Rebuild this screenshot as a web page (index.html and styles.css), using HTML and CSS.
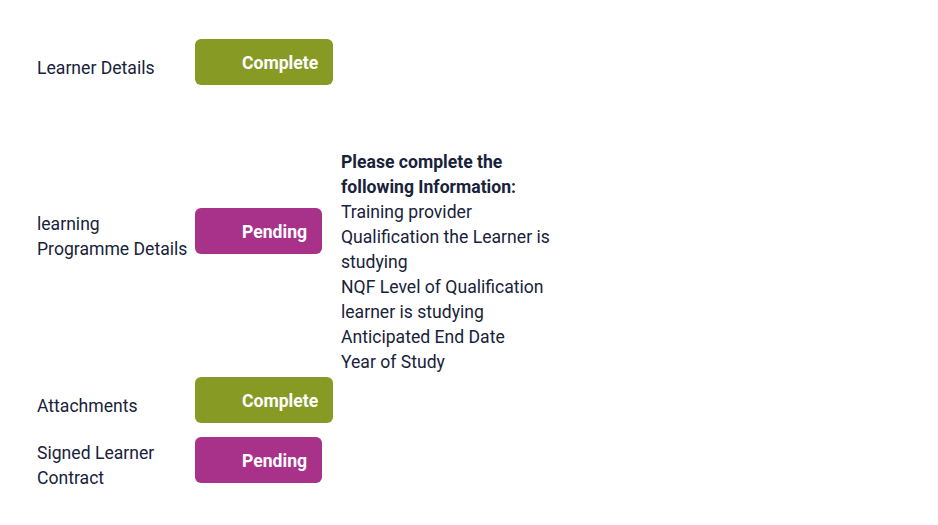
FILE: index.html
```html
<!DOCTYPE html>
<html lang="en">
<head>
<meta charset="utf-8">
<title>Application status</title>
<link rel="stylesheet" href="styles.css">
</head>
<body>
<div class="status-table">
  <div class="cell label">Learner Details</div>
  <div class="cell action"><span class="badge complete">Complete</span></div>
  <div class="cell info"></div>

  <div class="cell label">learning<br>Programme Details</div>
  <div class="cell action"><span class="badge pending">Pending</span></div>
  <div class="cell info">
    <div class="info-text">
      <strong>Please complete the following Information:</strong><br>
      Training provider<br>
      Qualification the Learner is studying<br>
      NQF Level of Qualification learner is studying<br>
      Anticipated End Date<br>
      Year of Study
    </div>
  </div>

  <div class="cell label">Attachments</div>
  <div class="cell action"><span class="badge complete">Complete</span></div>
  <div class="cell info"></div>

  <div class="cell label">Signed Learner Contract</div>
  <div class="cell action"><span class="badge pending">Pending</span></div>
  <div class="cell info"></div>
</div>
</body>
</html>
```
FILE: styles.css
```css
html, body {
  margin: 0;
  padding: 0;
  background: #ffffff;
}

body {
  font-family: Roboto, "Liberation Sans", sans-serif;
  font-size: 17.6px;
  line-height: 25px;
  color: #18223a;
}

.status-table {
  display: grid;
  grid-template-columns: 158px 146px 225px;
  align-items: center;
  padding: 37px 0 0 37px;
}

.cell {
  padding: 2px 0;
}

.label {
  width: 156px;
  padding: 3px 0 1px;
}

.info {
  padding: 2px 0 0;
}

.badge {
  display: inline-flex;
  align-items: center;
  height: 46px;
  box-sizing: border-box;
  padding: 2px 15px 0 47px;
  margin-bottom: 10px;
  border-radius: 6px;
  color: #ffffff;
  font-weight: 700;
  font-size: 17.6px;
  vertical-align: top;
}

.badge.complete {
  background: #869a24;
}

.badge.pending {
  background: #a8318a;
}

.action {
  display: flex;
}

.info-text {
  margin-top: 51px;
}

.info-text strong {
  font-weight: 700;
}
```
